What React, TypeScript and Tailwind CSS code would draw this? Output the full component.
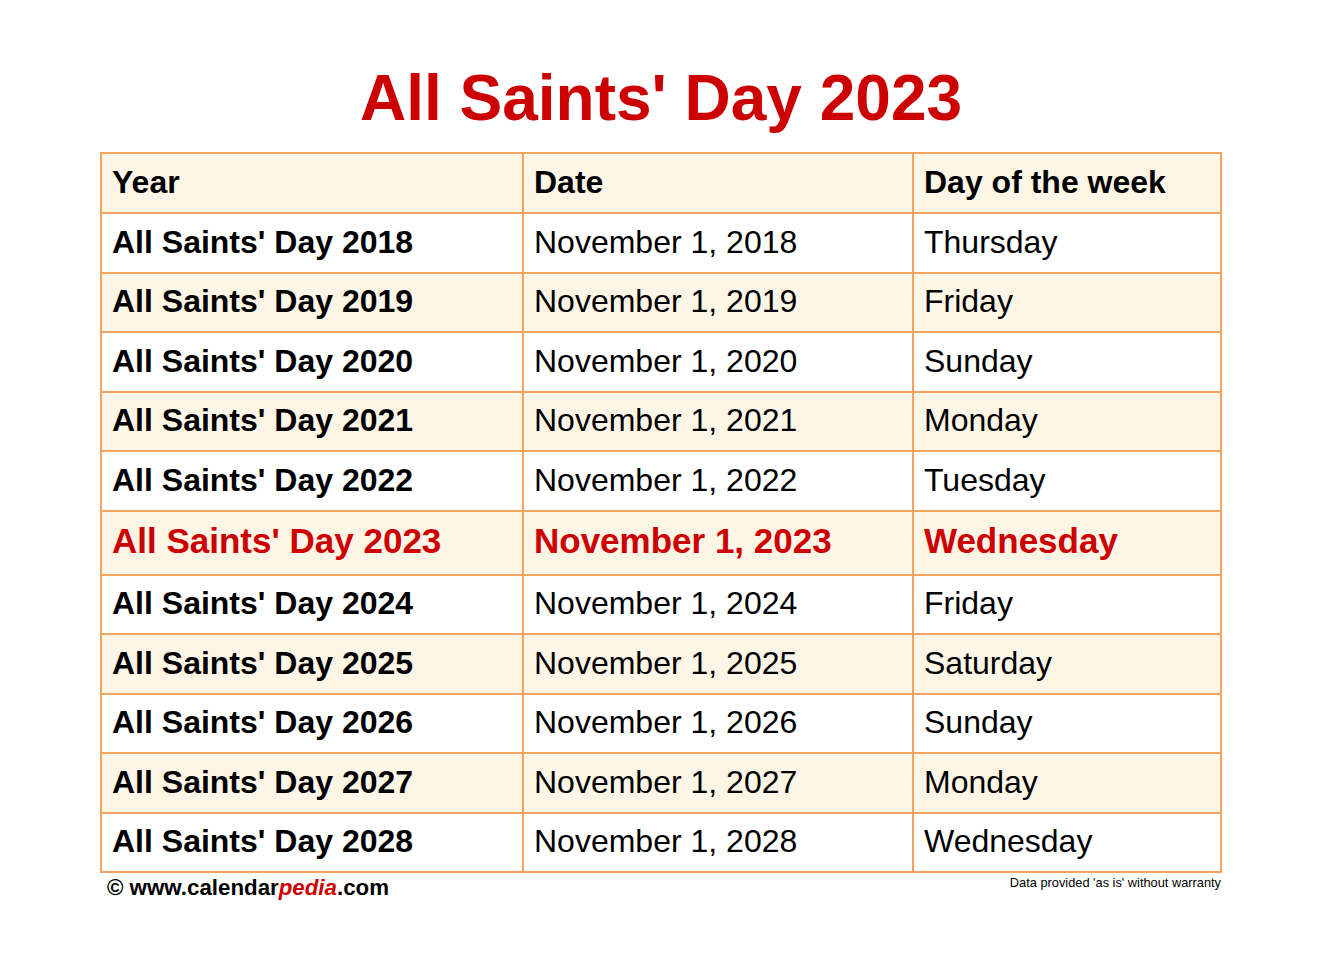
import React from "react";

interface Row {
  year: number;
  day: string;
}

const rows: Row[] = [
  { year: 2018, day: "Thursday" },
  { year: 2019, day: "Friday" },
  { year: 2020, day: "Sunday" },
  { year: 2021, day: "Monday" },
  { year: 2022, day: "Tuesday" },
  { year: 2023, day: "Wednesday" },
  { year: 2024, day: "Friday" },
  { year: 2025, day: "Saturday" },
  { year: 2026, day: "Sunday" },
  { year: 2027, day: "Monday" },
  { year: 2028, day: "Wednesday" },
];

const CURRENT = 2023;

export default function App() {
  return (
    <div className="min-h-screen bg-white font-['Liberation_Sans',Arial,sans-serif] text-black">
      <div className="mx-auto w-[1122px] pt-[61px]">
        <h1 className="mb-[17px] text-center text-[64px] font-bold leading-[74px] text-[#cc0000]">
          All Saints' Day 2023
        </h1>

        <div className="border-2 border-[#f4a460]">
          {/* header */}
          <div className="flex h-[58px] items-stretch bg-[#fdf5e6] text-[32px] font-bold">
            <div className="flex w-[420px] items-center pb-[2px] pl-[10px]">Year</div>
            <div className="flex w-[390px] items-center border-l-2 border-[#f4a460] pb-[2px] pl-[10px]">Date</div>
            <div className="flex w-[308px] items-center border-l-2 border-[#f4a460] pb-[2px] pl-[10px]">Day of the week</div>
          </div>

          {rows.map((r, i) => {
            const hot = r.year === CURRENT;
            const bg = i % 2 === 1 ? "bg-[#fdf5e6]" : "bg-white";
            return (
              <div
                key={r.year}
                className={`flex items-stretch border-t-2 border-[#f4a460] ${bg} ${
                  hot ? "h-[64px] text-[35px] font-bold text-[#cc0000]" : "h-[59.5px] text-[32px]"
                }`}
              >
                <div className="flex w-[420px] items-center pb-[2px] pl-[10px] font-bold">
                  All Saints' Day {r.year}
                </div>
                <div className="flex w-[390px] items-center border-l-2 border-[#f4a460] pb-[2px] pl-[10px]">
                  November 1, {r.year}
                </div>
                <div className="flex w-[308px] items-center border-l-2 border-[#f4a460] pb-[2px] pl-[10px]">
                  {r.day}
                </div>
              </div>
            );
          })}
        </div>

        <div className="mt-[4px] flex items-start justify-between leading-none">
          <div className="pl-[7px] text-[22.3px] font-bold">
            © www.calendar<span className="italic text-[#cc0000]">pedia</span>.com
          </div>
          <div className="pr-[1px] text-[12.8px]">Data provided 'as is' without warranty</div>
        </div>
      </div>
    </div>
  );
}
